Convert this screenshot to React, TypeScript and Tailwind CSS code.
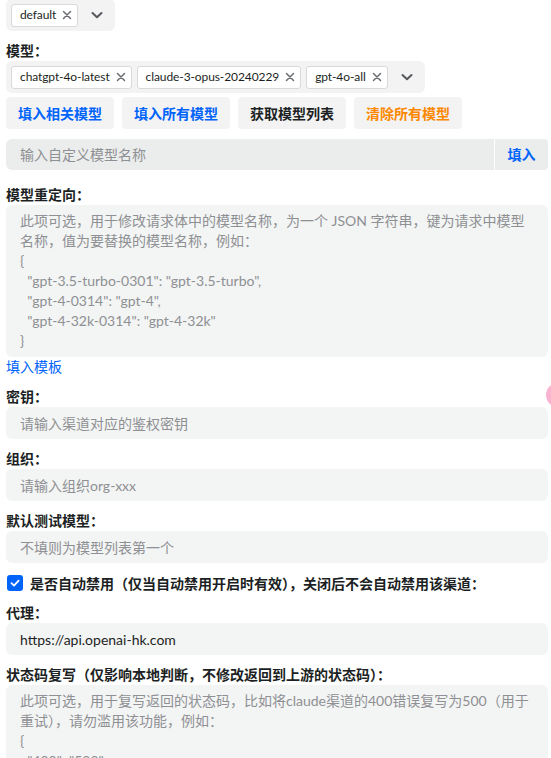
import React from "react";

const FONT = "font-['Lato','Noto_Sans_CJK_SC',sans-serif]";

function XIcon() {
  return (
    <svg width="10" height="10" viewBox="0 0 10 10" className="ml-[6px] shrink-0">
      <path d="M1.5 1.5 L8.5 8.5 M8.5 1.5 L1.5 8.5" stroke="#6b6e72" strokeWidth="1.5" strokeLinecap="round" />
    </svg>
  );
}

function Chevron() {
  return (
    <svg width="14" height="14" viewBox="0 0 14 14" className="shrink-0">
      <path d="M2.5 5 L7 9.2 L11.5 5" fill="none" stroke="#55585c" strokeWidth="2" strokeLinecap="round" strokeLinejoin="round" />
    </svg>
  );
}

function Tag({ text }: { text: string }) {
  return (
    <div className="flex h-[23px] items-center rounded-[3px] border border-[#d8d9db] bg-white pl-[8px] pr-[5px] text-[12px] tracking-[-0.1px] text-[#1c1f23]">
      <span>{text}</span>
      <XIcon />
    </div>
  );
}

function SelectBox({ tags }: { tags: string[] }) {
  return (
    <div className="inline-flex h-[32px] items-center rounded-[6px] bg-[#f3f3f4] pl-[5px] pr-[11px]">
      <div className="flex items-center gap-[5px]">
        {tags.map((t) => (
          <Tag key={t} text={t} />
        ))}
      </div>
      <div className="ml-[12px]">
        <Chevron />
      </div>
    </div>
  );
}

function Label({ children, className = "" }: { children: React.ReactNode; className?: string }) {
  return <div className={`mt-[10px] text-[14px] font-bold leading-[20px] text-[#1c1f23] ${className}`}>{children}</div>;
}

function Input({ placeholder, value }: { placeholder?: string; value?: string }) {
  return (
    <div className="flex h-[32px] items-center rounded-[6px] bg-[#f3f4f4] pl-[14px] text-[14px]">
      {value ? <span className="text-[#1c1f23]">{value}</span> : <span className="text-[#8e9093]">{placeholder}</span>}
    </div>
  );
}

function TextArea({ lines }: { lines: string[] }) {
  return (
    <div className="rounded-[6px] bg-[#f3f4f4] px-[14px] py-[6px] text-[14px] leading-[20px] text-[#8e9093]">
      {lines.map((l, i) => (
        <div key={i} className="whitespace-pre">
          {l}
        </div>
      ))}
    </div>
  );
}

export default function App() {
  return (
    <div className={`relative h-[758px] w-[551px] overflow-hidden bg-white ${FONT}`}>
      <div className="w-[548px] pl-[6px]">
        <div className="-mt-[1px]">
          <SelectBox tags={["default"]} />
        </div>

        <Label>模型：</Label>
        <SelectBox tags={["chatgpt-4o-latest", "claude-3-opus-20240229", "gpt-4o-all"]} />

        <div className="mt-[4px] flex gap-[8px]">
          <button className="h-[32px] w-[108px] rounded-[4px] bg-[#f3f3f4] text-[14px] font-bold text-[#0064fa]">填入相关模型</button>
          <button className="h-[32px] w-[108px] rounded-[4px] bg-[#f3f3f4] text-[14px] font-bold text-[#0064fa]">填入所有模型</button>
          <button className="h-[32px] w-[108px] rounded-[4px] bg-[#f3f3f4] text-[14px] font-bold text-[#1c1f23]">获取模型列表</button>
          <button className="h-[32px] w-[108px] rounded-[4px] bg-[#f3f3f4] text-[14px] font-bold text-[#fc8800]">清除所有模型</button>
        </div>

        <div className="mt-[10px] flex h-[31px] gap-[1px]">
          <div className="flex flex-1 items-center rounded-l-[6px] bg-[#ebecec] pl-[14px] text-[14px] text-[#8e9093]">
            输入自定义模型名称
          </div>
          <button className="w-[53px] rounded-r-[4px] bg-[#ebecec] text-[14px] font-bold text-[#0064fa]">填入</button>
        </div>

        <Label className="mt-[15px]">模型重定向：</Label>
        <TextArea
          lines={[
            "此项可选，用于修改请求体中的模型名称，为一个 JSON 字符串，键为请求中模型",
            "名称，值为要替换的模型名称，例如：",
            "{",
            '  "gpt-3.5-turbo-0301": "gpt-3.5-turbo",',
            '  "gpt-4-0314": "gpt-4",',
            '  "gpt-4-32k-0314": "gpt-4-32k"',
            "}",
          ]}
        />
        <div className="text-[14px] leading-[20px] text-[#0064fa]">填入模板</div>

        <Label>密钥：</Label>
        <Input placeholder="请输入渠道对应的鉴权密钥" />

        <Label>组织：</Label>
        <Input placeholder="请输入组织org-xxx" />

        <Label>默认测试模型：</Label>
        <Input placeholder="不填则为模型列表第一个" />

        <div className="mt-[10px] flex h-[20px] items-center">
          <div className="ml-[1px] flex h-[16px] w-[16px] items-center justify-center rounded-[3px] bg-[#0064fa]">
            <svg width="12" height="12" viewBox="0 0 12 12">
              <path d="M2.5 6.2 L5 8.6 L9.6 3.6" fill="none" stroke="white" strokeWidth="1.8" strokeLinecap="round" strokeLinejoin="round" />
            </svg>
          </div>
          <span className="ml-[7px] text-[14px] font-bold text-[#1c1f23]">
            是否自动禁用（仅当自动禁用开启时有效），关闭后不会自动禁用该渠道：
          </span>
        </div>

        <Label>代理：</Label>
        <Input value="https://api.openai-hk.com" />

        <Label>状态码复写（仅影响本地判断，不修改返回到上游的状态码）：</Label>
        <TextArea
          lines={[
            "此项可选，用于复写返回的状态码，比如将claude渠道的400错误复写为500（用于",
            "重试），请勿滥用该功能，例如：",
            "{",
            '  "400": "500"',
            "}",
          ]}
        />
      </div>

      <div className="absolute left-[546px] top-[383px] h-[24px] w-[24px] rounded-full bg-[#f8b3d0] blur-[0.5px]" />
    </div>
  );
}
